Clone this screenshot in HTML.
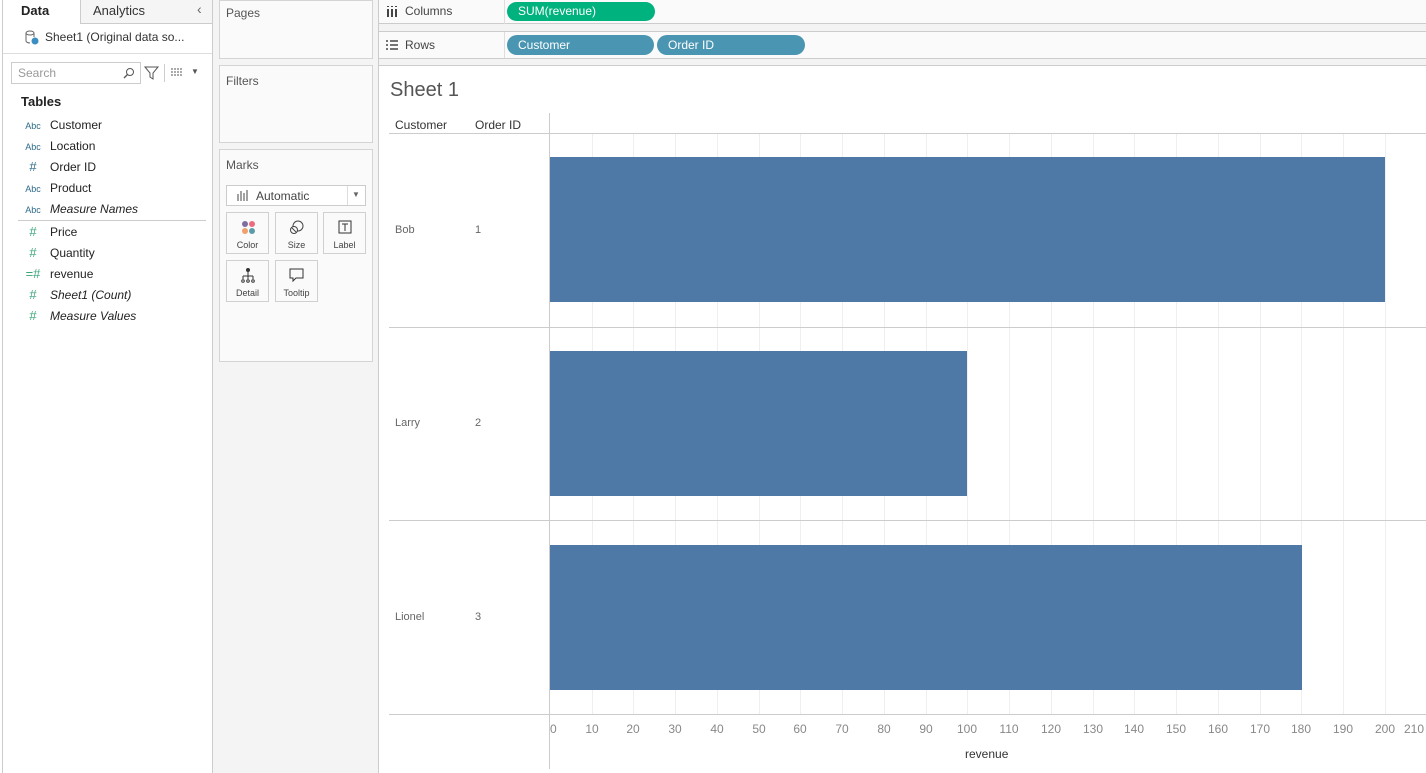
<!DOCTYPE html>
<html><head><meta charset="utf-8"><style>
*{box-sizing:border-box;margin:0;padding:0}
body{width:1426px;height:773px;overflow:hidden;background:#fff;font-family:"Liberation Sans",sans-serif;position:relative;color:#333}
.a{position:absolute}
.fld{position:absolute;left:50px;font-size:12px;color:#222}
.ic{position:absolute;left:22px;font-size:9px;color:#2d6a8a;width:22px;text-align:center}
.icg{color:#3aa57a;font-size:13px}
.box{position:absolute;background:#fafafa;border:1px solid #d4d4d4}
.lbl{position:absolute;font-size:12px;color:#555}
.mb{position:absolute;width:43px;height:42px;border:1px solid #d0d0d0;background:#fafafa;font-size:9px;color:#444;text-align:center}
.mb span{position:absolute;bottom:3px;left:0;right:0}
.g{position:absolute;top:133px;height:581px;width:1px;background:#efefef}
.t{position:absolute;top:722px;font-size:12px;color:#888;width:40px;text-align:center;margin-left:-20px}
.hl{position:absolute;height:1px;background:#ccc}
.bar{position:absolute;left:550px;height:145px;background:#4e79a7}
.rl{position:absolute;font-size:11px;color:#666}
</style></head><body>
<!-- left panel -->
<div class="a" style="left:2px;top:0;width:1px;height:773px;background:#ccc"></div>
<div class="a" style="left:212px;top:0;width:1px;height:773px;background:#ccc"></div>
<div class="a" style="left:80px;top:0;width:132px;height:24px;background:#f5f5f5;border-left:1px solid #ccc;border-bottom:1px solid #ccc"></div>
<div class="a" style="left:21px;top:3px;font-size:13px;font-weight:bold;color:#222">Data</div>
<div class="a" style="left:93px;top:3px;font-size:13px;color:#333">Analytics</div>
<div class="a" style="left:197px;top:1px;font-size:14px;color:#666">‹</div>
<svg class="a" style="left:24px;top:30px" width="16" height="16"><ellipse cx="6" cy="3" rx="4" ry="2" fill="none" stroke="#666"/><path d="M2 3v8c0 1 2 2 4 2M10 3v4" fill="none" stroke="#666"/><circle cx="11" cy="11" r="3.5" fill="#3b8ec2"/></svg>
<div class="a" style="left:45px;top:30px;font-size:12px;color:#333">Sheet1 (Original data so...</div>
<div class="a" style="left:3px;top:53px;width:209px;height:1px;background:#ddd"></div>
<div class="a" style="left:11px;top:62px;width:130px;height:22px;border:1px solid #ccc;background:#fff"></div>
<div class="a" style="left:18px;top:66px;font-size:12px;color:#999">Search</div>
<svg class="a" style="left:122px;top:66px" width="14" height="14"><circle cx="8" cy="6" r="3.5" fill="none" stroke="#555"/><path d="M5.5 8.5L2 12" stroke="#555" stroke-width="1.3"/></svg>
<svg class="a" style="left:144px;top:66px" width="16" height="14"><path d="M1 1h13l-5 6v6l-3-2V7z" fill="none" stroke="#555"/></svg>
<div class="a" style="left:164px;top:64px;width:1px;height:18px;background:#ccc"></div>
<svg class="a" style="left:171px;top:68px" width="12" height="8"><path d="M0 1h12M0 4h12M0 7h12" stroke="#555" stroke-dasharray="2 1"/></svg>
<div class="a" style="left:191px;top:67px;font-size:8px;color:#555">▼</div>
<div class="a" style="left:21px;top:94px;font-size:13px;font-weight:bold;color:#222">Tables</div>
<div class="ic" style="top:121px">Abc</div><div class="fld" style="top:118px">Customer</div>
<div class="ic" style="top:142px">Abc</div><div class="fld" style="top:139px">Location</div>
<div class="ic" style="top:159px;font-size:13px">#</div><div class="fld" style="top:160px">Order ID</div>
<div class="ic" style="top:184px">Abc</div><div class="fld" style="top:181px">Product</div>
<div class="ic" style="top:205px">Abc</div><div class="fld" style="top:202px;font-style:italic">Measure Names</div>
<div class="a" style="left:18px;top:220px;width:188px;height:1px;background:#ccc"></div>
<div class="ic icg" style="top:224px">#</div><div class="fld" style="top:225px">Price</div>
<div class="ic icg" style="top:245px">#</div><div class="fld" style="top:246px">Quantity</div>
<div class="ic icg" style="top:266px">=#</div><div class="fld" style="top:267px">revenue</div>
<div class="ic icg" style="top:287px">#</div><div class="fld" style="top:288px;font-style:italic">Sheet1 (Count)</div>
<div class="ic icg" style="top:308px">#</div><div class="fld" style="top:309px;font-style:italic">Measure Values</div>
<!-- middle panel -->
<div class="a" style="left:213px;top:0;width:166px;height:773px;background:#f4f4f4"></div>
<div class="a" style="left:378px;top:0;width:1px;height:773px;background:#ccc"></div>
<div class="box" style="left:219px;top:0;width:154px;height:59px"></div>
<div class="lbl" style="left:226px;top:6px">Pages</div>
<div class="box" style="left:219px;top:65px;width:154px;height:78px"></div>
<div class="lbl" style="left:226px;top:74px">Filters</div>
<div class="box" style="left:219px;top:149px;width:154px;height:213px"></div>
<div class="lbl" style="left:226px;top:158px">Marks</div>
<div class="a" style="left:226px;top:185px;width:140px;height:21px;border:1px solid #ccc;background:#fff"></div>
<div class="a" style="left:347px;top:186px;width:1px;height:19px;background:#ddd"></div>
<div class="a" style="left:352px;top:190px;font-size:8px;color:#666">▼</div>
<svg class="a" style="left:237px;top:189px" width="12" height="12"><path d="M1 5v7M4 2v10M7 4v8M10 1v11" stroke="#444"/></svg>
<div class="a" style="left:256px;top:189px;font-size:12px;color:#444">Automatic</div>
<div class="mb" style="left:226px;top:212px"><svg style="position:absolute;left:14px;top:7px" width="15" height="15"><circle cx="4" cy="4" r="3" fill="#7e6fa0"/><circle cx="11" cy="4" r="3" fill="#ec6b7c"/><circle cx="4" cy="11" r="3" fill="#f0a06c"/><circle cx="11" cy="11" r="3" fill="#5c9ca8"/></svg><span>Color</span></div>
<div class="mb" style="left:275px;top:212px"><svg style="position:absolute;left:13px;top:7px" width="16" height="15"><circle cx="9" cy="6" r="5" fill="none" stroke="#444"/><circle cx="5" cy="10" r="3.5" fill="#fafafa" stroke="#444"/><path d="M3 8l4 4" stroke="#444"/></svg><span>Size</span></div>
<div class="mb" style="left:323px;top:212px"><svg style="position:absolute;left:14px;top:7px" width="14" height="14"><rect x="1" y="1" width="12" height="12" fill="none" stroke="#333"/><path d="M4 4h6M7 4v7" stroke="#333"/></svg><span>Label</span></div>
<div class="mb" style="left:226px;top:260px"><svg style="position:absolute;left:14px;top:7px" width="15" height="15"><circle cx="7" cy="2" r="2" fill="#333"/><path d="M7 4v4M2 8h10M2 8v3M7 8v3M12 8v3" stroke="#333"/><circle cx="2" cy="13" r="1.3" fill="none" stroke="#333"/><circle cx="7" cy="13" r="1.3" fill="none" stroke="#333"/><circle cx="12" cy="13" r="1.3" fill="none" stroke="#333"/></svg><span>Detail</span></div>
<div class="mb" style="left:275px;top:260px"><svg style="position:absolute;left:13px;top:7px" width="16" height="15"><path d="M1 1h13v9H7l-3 3v-3H1z" fill="none" stroke="#333"/></svg><span>Tooltip</span></div>
<!-- shelves -->
<div class="a" style="left:379px;top:0;width:1047px;height:66px;background:#f3f3f3"></div>
<div class="a" style="left:379px;top:0;width:1047px;height:24px;background:#fafafa;border-bottom:1px solid #ccc"></div>
<div class="a" style="left:379px;top:31px;width:1047px;height:28px;background:#fafafa;border-top:1px solid #ccc;border-bottom:1px solid #ccc"></div>
<div class="a" style="left:379px;top:65px;width:1047px;height:1px;background:#ccc"></div>
<div class="a" style="left:504px;top:0;width:1px;height:24px;background:#ddd"></div>
<div class="a" style="left:504px;top:32px;width:1px;height:26px;background:#ddd"></div>
<svg class="a" style="left:386px;top:5px" width="12" height="12"><path d="M2 4v8M6 4v8M10 4v8" stroke="#444" stroke-width="2"/><path d="M2 1v1M6 1v1M10 1v1" stroke="#444" stroke-width="2"/></svg>
<div class="a" style="left:405px;top:4px;font-size:12px;color:#444">Columns</div>
<svg class="a" style="left:386px;top:39px" width="12" height="12"><path d="M0 2h2M0 6h2M0 10h2M4 2h8M4 6h8M4 10h8" stroke="#444" stroke-width="1.4"/></svg>
<div class="a" style="left:405px;top:38px;font-size:12px;color:#444">Rows</div>
<div class="a" style="left:507px;top:2px;width:148px;height:19px;border-radius:10px;background:#00b27d;color:#fff;font-size:12px;padding:2px 0 0 11px">SUM(revenue)</div>
<div class="a" style="left:507px;top:35px;width:147px;height:20px;border-radius:10px;background:#4a96b2;color:#fff;font-size:12px;padding:3px 0 0 11px">Customer</div>
<div class="a" style="left:657px;top:35px;width:148px;height:20px;border-radius:10px;background:#4a96b2;color:#fff;font-size:12px;padding:3px 0 0 11px">Order ID</div>
<!-- sheet -->
<div class="a" style="left:390px;top:79px;font-size:20px;color:#555">Sheet 1</div>
<div class="a" style="left:395px;top:118px;font-size:12px;color:#333">Customer</div>
<div class="a" style="left:475px;top:118px;font-size:12px;color:#333">Order ID</div>
<div class="g" style="left:592px"></div><div class="g" style="left:633px"></div><div class="g" style="left:675px"></div><div class="g" style="left:717px"></div><div class="g" style="left:759px"></div><div class="g" style="left:800px"></div><div class="g" style="left:842px"></div><div class="g" style="left:884px"></div><div class="g" style="left:926px"></div><div class="g" style="left:967px"></div><div class="g" style="left:1009px"></div><div class="g" style="left:1051px"></div><div class="g" style="left:1093px"></div><div class="g" style="left:1134px"></div><div class="g" style="left:1176px"></div><div class="g" style="left:1218px"></div><div class="g" style="left:1260px"></div><div class="g" style="left:1301px"></div><div class="g" style="left:1343px"></div><div class="g" style="left:1385px"></div>
<div class="hl" style="left:389px;top:133px;width:1037px"></div>
<div class="hl" style="left:389px;top:327px;width:1037px"></div>
<div class="hl" style="left:389px;top:520px;width:1037px"></div>
<div class="hl" style="left:389px;top:714px;width:1037px"></div>
<div class="a" style="left:549px;top:113px;width:1px;height:656px;background:#ccc"></div>
<div class="bar" style="top:157px;width:835px"></div>
<div class="bar" style="top:351px;width:417px"></div>
<div class="bar" style="top:545px;width:752px"></div>
<div class="rl" style="left:395px;top:224px">Bob</div><div class="rl" style="left:475px;top:224px">1</div>
<div class="rl" style="left:395px;top:417px">Larry</div><div class="rl" style="left:475px;top:417px">2</div>
<div class="rl" style="left:395px;top:611px">Lionel</div><div class="rl" style="left:475px;top:611px">3</div>
<div class="t" style="left:570px;width:auto;margin-left:-20px;left:571px">&nbsp;</div>
<div class="a" style="left:550px;top:722px;font-size:12px;color:#888">0</div>
<div class="t" style="left:592px">10</div><div class="t" style="left:633px">20</div><div class="t" style="left:675px">30</div><div class="t" style="left:717px">40</div><div class="t" style="left:759px">50</div><div class="t" style="left:800px">60</div><div class="t" style="left:842px">70</div><div class="t" style="left:884px">80</div><div class="t" style="left:926px">90</div><div class="t" style="left:967px">100</div><div class="t" style="left:1009px">110</div><div class="t" style="left:1051px">120</div><div class="t" style="left:1093px">130</div><div class="t" style="left:1134px">140</div><div class="t" style="left:1176px">150</div><div class="t" style="left:1218px">160</div><div class="t" style="left:1260px">170</div><div class="t" style="left:1301px">180</div><div class="t" style="left:1343px">190</div><div class="t" style="left:1385px">200</div><div class="t" style="left:1414px">210</div>
<div class="a" style="left:965px;top:747px;font-size:12px;color:#333">revenue</div>
</body></html>
